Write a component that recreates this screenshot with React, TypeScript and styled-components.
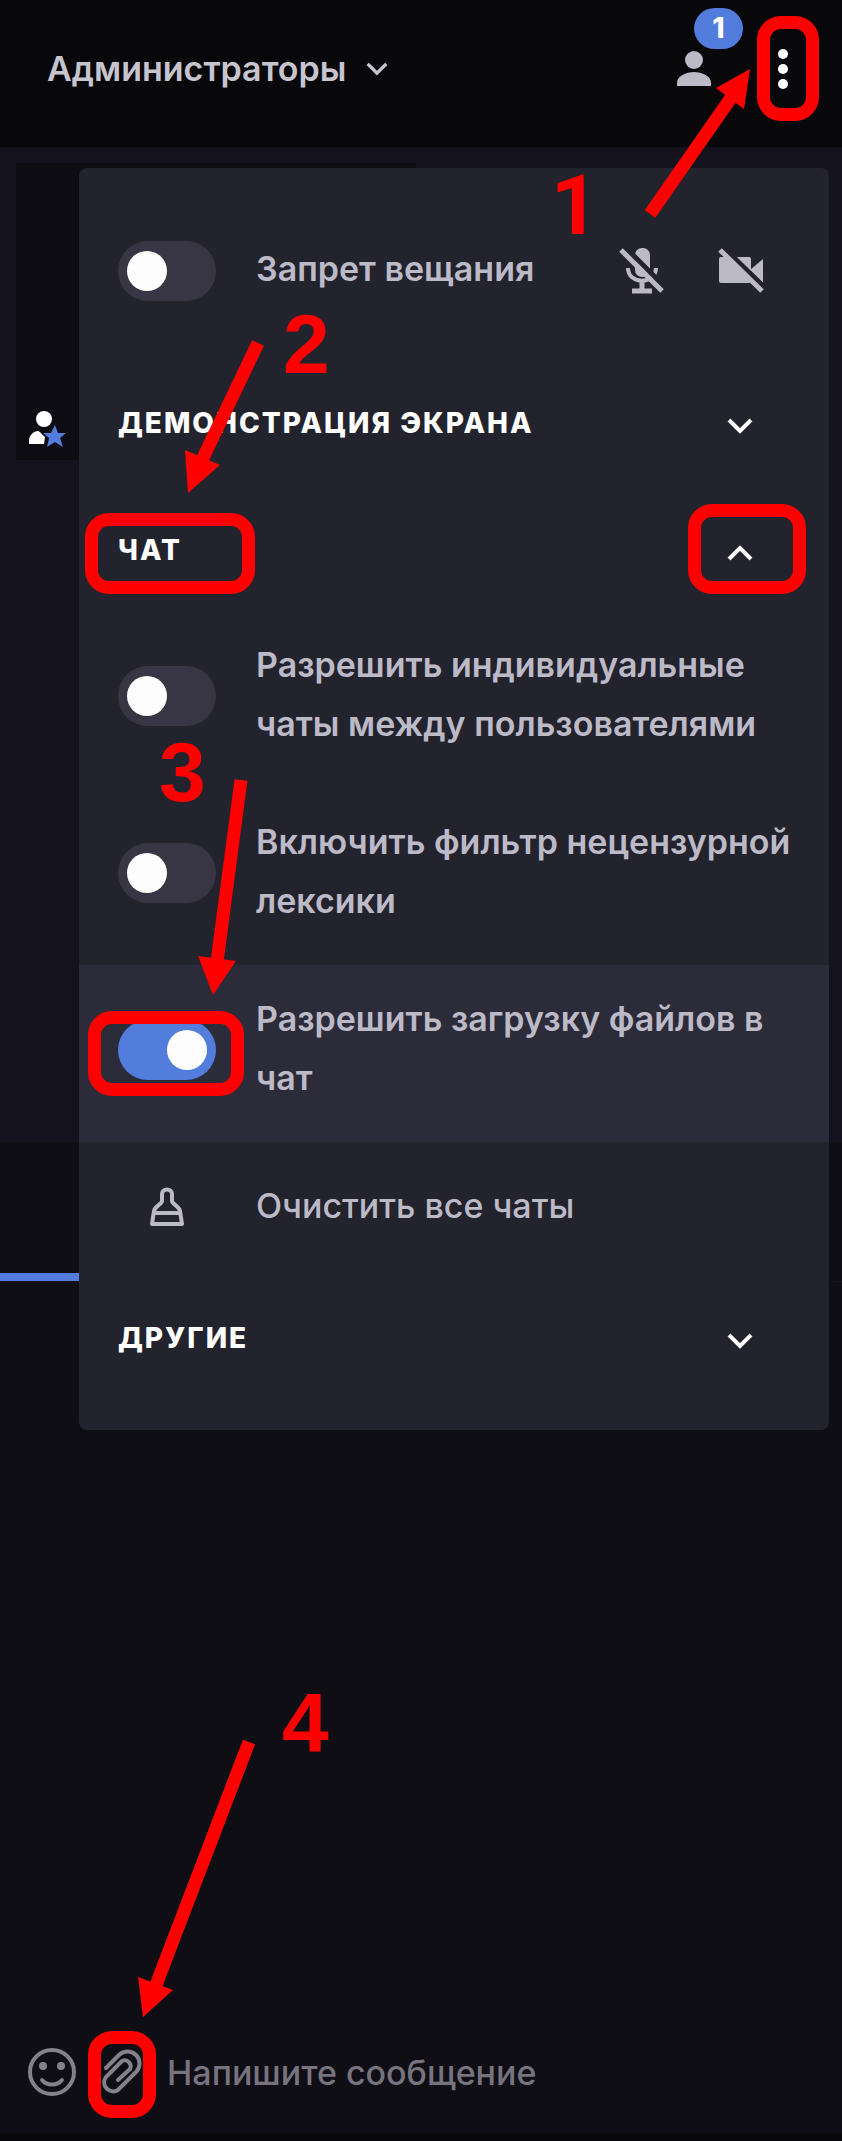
import React, { useState } from 'react';
import styled, { createGlobalStyle, css } from 'styled-components';

const RED = '#ff0000';
const BLUE = '#527ddd';

const GlobalStyle = createGlobalStyle`
  * { box-sizing: border-box; }
  body {
    margin: 0;
    background: #0f0e14;
    color: #bdbac8;
    font-family: Inter, 'Noto Sans', sans-serif;
  }
  button, input {
    font: inherit;
    color: inherit;
    background: none;
    border: 0;
    padding: 0;
    margin: 0;
  }
  button { cursor: pointer; }
  svg { display: block; overflow: visible; flex: none; }
`;

const Page = styled.div`
  position: relative;
  display: flex;
  flex-direction: column;
  min-height: 100vh;
`;

const Header = styled.header`
  position: relative;
  z-index: 3;
  display: flex;
  align-items: center;
  justify-content: space-between;
  height: 147px;
  padding: 0 54px 10px 47px;
  background: #08080a;
`;

const GroupButton = styled.button`
  display: flex;
  align-items: center;
  gap: 20px;
  font-size: 34px;
  line-height: 44px;
  font-weight: 600;
  color: #c6c4ce;
`;

const HeaderActions = styled.div`
  display: flex;
  align-items: center;
  gap: 67px;
`;

const PeopleButton = styled.button`
  position: relative;
`;

const CountBadge = styled.span`
  position: absolute;
  left: 17px;
  bottom: 37px;
  width: 49px;
  height: 41px;
  border-radius: 21px;
  background: ${BLUE};
  color: #fff;
  font-size: 28px;
  line-height: 41px;
  font-weight: 800;
  text-align: center;
`;

const Stage = styled.section`
  height: 995px;
  padding: 16px;
  background: #14121c;
`;

const VideoTile = styled.div`
  display: flex;
  align-items: flex-end;
  width: 400px;
  max-width: 100%;
  height: 297px;
  padding: 13px;
  background: #0d0c12;
`;

const TabBar = styled.div`
  display: flex;
  height: 140px;
  border-bottom: 1px solid #14121c;
`;

const ActiveTab = styled.div`
  flex: 1;
  max-width: 50%;
  border-bottom: 8px solid ${BLUE};
`;

const Messages = styled.main`
  flex: 1;
`;

const Composer = styled.form`
  position: relative;
  display: flex;
  align-items: center;
  height: 127px;
  padding: 0 28px 4px 27px;
  border-bottom: 7px solid #08080a;
  color: #84818d;
`;

const ComposerButton = styled.button`
  margin-right: 24px;
`;

const MessageInput = styled.input`
  flex: 1;
  min-width: 0;
  height: 44px;
  outline: none;
  font-size: 34px;
  font-weight: 500;
  color: #c6c4ce;
  &::placeholder { color: #777480; opacity: 1; }
`;

const Menu = styled.aside`
  position: absolute;
  z-index: 2;
  top: 168px;
  left: 79px;
  right: 13px;
  padding: 16px 0 31px;
  border-radius: 8px;
  background: #23232e;
`;

const rowLayout = css`
  display: flex;
  width: 100%;
  padding-left: 39px;
  padding-right: 24px;
  text-align: left;
  font-size: 34px;
  line-height: 59px;
`;

const SingleRow = styled.div`
  ${rowLayout}
  align-items: center;
  height: 173px;
  padding-right: 65px;
  gap: 40px;
`;

const OptionRow = styled.label<{ $active?: boolean }>`
  ${rowLayout}
  gap: 40px;
  align-items: center;
  min-height: 177px;
  padding-top: 20px;
  padding-bottom: 28px;
  cursor: pointer;
  background: ${p => (p.$active ? '#2c2b3a' : 'transparent')};
`;

const ActionRow = styled.button`
  ${rowLayout}
  gap: 40px;
  align-items: center;
  height: 130px;
`;

const IconSlot = styled.span`
  display: flex;
  justify-content: center;
  flex: none;
  width: 98px;
`;

const RowText = styled.span<{ $weight?: number }>`
  flex: 1;
  min-width: 0;
  padding-bottom: 4px;
  font-weight: ${p => p.$weight ?? 600};
`;

const DeviceIcons = styled.div`
  display: flex;
  gap: 54px;
`;

const SectionButton = styled.button`
  display: flex;
  align-items: center;
  justify-content: space-between;
  width: 100%;
  height: 127px;
  padding: 4px 76px 0 39px;
  color: #fff;
  font-size: 28px;
  line-height: 36px;
  font-weight: 800;
  letter-spacing: 2px;
  text-transform: uppercase;
  svg { margin-top: 6px; }
`;

const Switch = styled.input.attrs({ type: 'checkbox', role: 'switch' })`
  appearance: none;
  position: relative;
  flex: none;
  width: 98px;
  height: 60px;
  border-radius: 30px;
  background: #383645;
  cursor: pointer;
  &::before {
    content: '';
    position: absolute;
    top: 10px;
    left: 9px;
    width: 40px;
    height: 40px;
    border-radius: 50%;
    background: #fdfdfd;
  }
  &:checked { background: ${BLUE}; }
  &:checked::before { left: 49px; }
`;

type Spot = { $left?: number; $right?: number; $top?: number; $bottom?: number };

const spot = css<Spot>`
  position: absolute;
  z-index: 4;
  pointer-events: none;
  ${p => p.$left !== undefined && `left: ${p.$left}px;`}
  ${p => p.$right !== undefined && `right: ${p.$right}px;`}
  ${p => p.$top !== undefined && `top: ${p.$top}px;`}
  ${p => p.$bottom !== undefined && `bottom: ${p.$bottom}px;`}
`;

const Frame = styled.span<Spot & { $w: number; $h: number }>`
  ${spot}
  width: ${p => p.$w}px;
  height: ${p => p.$h}px;
  border: 13px solid ${RED};
  border-radius: 24px;
`;

const StepNumber = styled.span<Spot & { $face?: string }>`
  ${spot}
  color: ${RED};
  font-family: ${p => p.$face ?? "'Liberation Sans'"}, Arial, sans-serif;
  font-size: 84px;
  line-height: 84px;
  font-weight: 700;
`;

const ArrowBox = styled.svg<Spot>`
  ${spot}
`;

const Arrow = ({ w, h, shaft, head, ...pos }: { w: number; h: number; shaft: number[]; head: string } & Spot) => (
  <ArrowBox {...pos} width={w} height={h} viewBox={`0 0 ${w} ${h}`} aria-hidden="true">
    <line x1={shaft[0]} y1={shaft[1]} x2={shaft[2]} y2={shaft[3]} stroke={RED} strokeWidth="13" />
    <polygon points={head} fill={RED} />
  </ArrowBox>
);

const Chevron = ({ up, small }: { up?: boolean; small?: boolean }) => (
  <svg width={small ? 22 : 26} height={small ? 14 : 16} viewBox="0 0 26 16" fill="none" stroke="currentColor" strokeWidth="4">
    <path d={up ? 'M2 14 13 3 24 14' : 'M2 2 13 13 24 2'} />
  </svg>
);

const PersonIcon = () => (
  <svg width="34" height="35" viewBox="0 0 34 35" fill="#bdbac8">
    <circle cx="17" cy="9" r="9" />
    <path d="M0 35v-3c0-7 9-11 17-11s17 4 17 11v3z" />
  </svg>
);

const DotsIcon = () => (
  <svg width="10" height="40" viewBox="0 0 10 40" fill="#fff">
    <circle cx="5" cy="5" r="5" />
    <circle cx="5" cy="20" r="5" />
    <circle cx="5" cy="35" r="5" />
  </svg>
);

const HostIcon = () => (
  <svg width="36" height="36" viewBox="0 0 36 36">
    <circle cx="15" cy="8" r="8" fill="#fff" />
    <path d="M0 33v-3c0-6 5-10 9-10 3 1 4 4 7 6l-1 7z" fill="#fff" />
    <path d="M26 14l3 8h8l-6 5 3 9-8-5-8 5 2-9-6-5h8z" fill={BLUE} />
  </svg>
);

const MicOffIcon = () => (
  <svg width="44" height="46" viewBox="0 0 44 46">
    <mask id="mic-gap">
      <rect x="-2" y="-2" width="50" height="50" fill="#fff" />
      <path d="M5-1 48 42" stroke="#000" strokeWidth="5" />
    </mask>
    <g mask="url(#mic-gap)">
      <rect x="15" y="0" width="15" height="29" rx="7" fill="#bdbac8" />
      <path d="M8 20c0 17 28 17 28 0" fill="none" stroke="#bdbac8" strokeWidth="4" />
      <path d="M22 31v10M12 43h20" stroke="#bdbac8" strokeWidth="5" />
    </g>
    <path d="M1 2 42 43" stroke="#bdbac8" strokeWidth="5" />
  </svg>
);

const CameraOffIcon = () => (
  <svg width="46" height="46" viewBox="0 0 46 46">
    <mask id="camera-gap">
      <rect x="-2" y="-2" width="50" height="50" fill="#fff" />
      <path d="M5-1 49 42" stroke="#000" strokeWidth="5" />
    </mask>
    <g mask="url(#camera-gap)" fill="#bdbac8">
      <rect x="1" y="9" width="32" height="26" rx="2" />
      <path d="M32 22 45 11v24z" />
    </g>
    <path d="M2 2 44 43" stroke="#bdbac8" strokeWidth="5" />
  </svg>
);

const ClearIcon = () => (
  <svg width="34" height="40" viewBox="0 0 34 40" fill="none" stroke="#bdbac8" strokeWidth="4" strokeLinejoin="round">
    <path d="M12 7c0-6 10-6 10 0v7c0 3 7 5 8 10l2 13H2l2-13c1-5 8-7 8-10z" />
    <path d="M4 26h26" />
  </svg>
);

const SmileIcon = () => (
  <svg width="50" height="50" viewBox="0 0 50 50" fill="none" stroke="currentColor" strokeWidth="4">
    <circle cx="25" cy="25" r="22" />
    <path d="M15 33c5 6 15 6 20 0" strokeLinecap="round" />
    <circle cx="16" cy="19" r="4" fill="currentColor" stroke="none" />
    <circle cx="34" cy="19" r="4" fill="currentColor" stroke="none" />
  </svg>
);

const ClipIcon = () => (
  <svg width="42" height="48" viewBox="0 0 42 48" fill="none" stroke="currentColor" strokeWidth="4" strokeLinecap="round">
    <path d="M5 20 18 7a12 12 0 0 1 17 17L17 42A9 9 0 0 1 5 29L21 13a6 6 0 0 1 8 8L17 32" />
  </svg>
);

const chatOptions = [
  { id: 'direct', text: 'Разрешить индивидуальные чаты между пользователями', on: false },
  { id: 'filter', text: 'Включить фильтр нецензурной лексики', on: false },
  { id: 'files', text: 'Разрешить загрузку файлов в чат', on: true },
];

export default function App() {
  const [chatOpen, setChatOpen] = useState(true);

  return (
    <Page>
      <GlobalStyle />
      <Header>
        <GroupButton type="button">
          Администраторы
          <Chevron small />
        </GroupButton>
        <HeaderActions>
          <PeopleButton type="button" aria-label="Участники">
            <PersonIcon />
            <CountBadge>1</CountBadge>
          </PeopleButton>
          <button type="button" aria-label="Меню">
            <DotsIcon />
          </button>
        </HeaderActions>
        <Frame $right={23} $top={16} $w={62} $h={105} />
        <Arrow $right={84} $top={69} w={112} h={150} shaft={[4, 145, 87, 26]} head="104,0 70,19 98,40" />
        <StepNumber $right={243} $top={164} $face="Roboto">1</StepNumber>
      </Header>

      <Stage>
        <VideoTile>
          <HostIcon />
        </VideoTile>
      </Stage>
      <TabBar>
        <ActiveTab />
      </TabBar>
      <Messages />

      <Composer onSubmit={e => e.preventDefault()}>
        <ComposerButton type="button" aria-label="Смайлы">
          <SmileIcon />
        </ComposerButton>
        <ComposerButton type="button" aria-label="Прикрепить файл">
          <ClipIcon />
        </ComposerButton>
        <MessageInput type="text" placeholder="Напишите сообщение" aria-label="Напишите сообщение" />
        <Frame $left={88} $bottom={16} $w={68} $h={87} />
        <Arrow $left={138} $bottom={117} w={118} h={278} shaft={[111, 3, 18, 246]} head="5,278 0,238 35,251" />
        <StepNumber $left={282} $bottom={369}>4</StepNumber>
      </Composer>

      <Menu>
        <SingleRow>
          <Switch id="mute-all" />
          <RowText as="label" htmlFor="mute-all">Запрет вещания</RowText>
          <DeviceIcons>
            <MicOffIcon />
            <CameraOffIcon />
          </DeviceIcons>
        </SingleRow>

        <SectionButton type="button" aria-expanded={false}>
          Демонстрация экрана
          <Chevron />
        </SectionButton>

        <SectionButton type="button" aria-expanded={chatOpen} onClick={() => setChatOpen(!chatOpen)}>
          Чат
          <Chevron up={chatOpen} />
        </SectionButton>
        {chatOpen && (
          <>
            {chatOptions.map(o => (
              <OptionRow key={o.id} $active={o.on}>
                <Switch defaultChecked={o.on} />
                <RowText>{o.text}</RowText>
              </OptionRow>
            ))}
            <ActionRow type="button">
              <IconSlot>
                <ClearIcon />
              </IconSlot>
              <RowText $weight={500}>Очистить все чаты</RowText>
            </ActionRow>
          </>
        )}

        <SectionButton type="button" aria-expanded={false}>
          Другие
          <Chevron />
        </SectionButton>

        <Frame $left={6} $top={345} $w={170} $h={81} />
        <Frame $right={23} $top={336} $w={118} $h={90} />
        <Frame $left={9} $top={843} $w={156} $h={85} />
        <Arrow $left={106} $top={172} w={80} h={154} shaft={[73, 3, 18, 118]} head="3,153 0,110 35,125" />
        <Arrow $left={120} $top={612} w={44} h={216} shaft={[42, 0, 18, 182]} head="14,215 -1,176 37,181" />
        <StepNumber $left={204} $top={134}>2</StepNumber>
        <StepNumber $left={80} $top={562}>3</StepNumber>
      </Menu>
    </Page>
  );
}
